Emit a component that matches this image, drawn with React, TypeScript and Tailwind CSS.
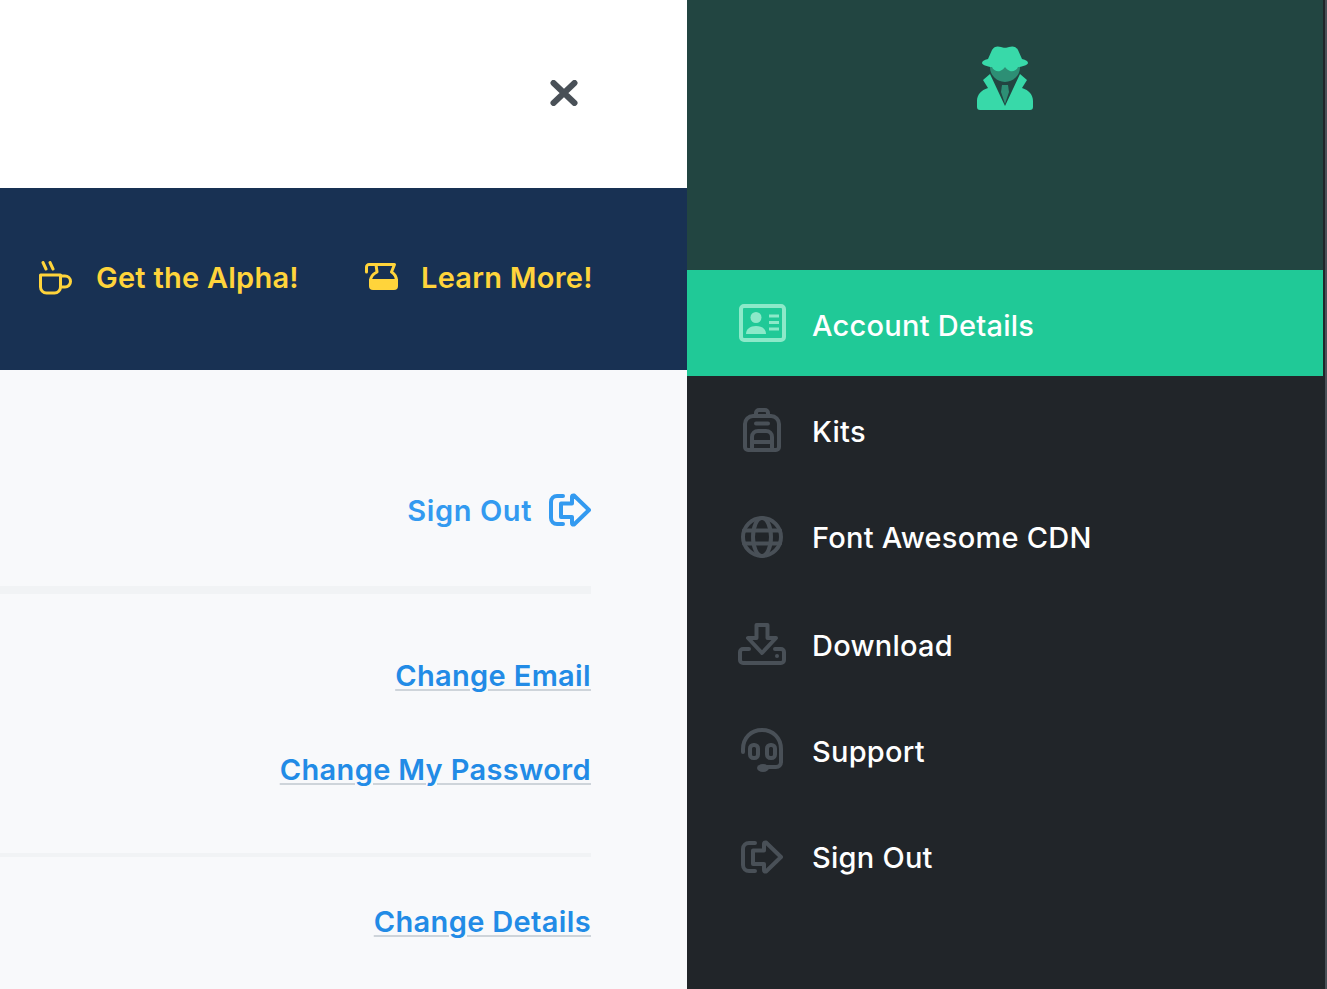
const font = { fontFamily: '"Inter", sans-serif' }

function Stroke({ className, children, w = 48, h = 48 }: { className: string; children: React.ReactNode; w?: number; h?: number }) {
  return (
    <svg width={w} height={h} viewBox={`0 0 ${w} ${h}`} fill="none" stroke="currentColor" strokeWidth="4" strokeLinecap="round" strokeLinejoin="round" className={className}>
      {children}
    </svg>
  )
}

const SignOutPaths = () => (
  <>
    <path d="M14 3H8A6 6 0 0 0 2 9V25A6 6 0 0 0 8 31H14" />
    <path d="M25 2.500L40 17L25 31.500Q23 32 23 30V24H12V10.500H23V4Q23 2 25 2.500Z" />
  </>
)

const items = [
  {
    label: 'Account Details',
    active: true,
    icon: (
      <Stroke className="text-[#8ce9c9] -translate-y-[3px]">
        <rect x="3" y="7" width="43" height="34" rx="3" />
        <circle cx="18" cy="18.500" r="5.500" fill="currentColor" stroke="none" />
        <path d="M8 35c0-5 4-8 10-8s10 3 10 8z" fill="currentColor" stroke="none" />
        <path d="M31 17h10M31 23.500h10M31 30h10" strokeWidth="3" strokeLinecap="butt" />
      </Stroke>
    ),
  },
  {
    label: 'Kits',
    icon: (
      <Stroke className="text-[#495057] -translate-y-[2px]" h={44}>
        <path d="M18 6V5a3 3 0 0 1 3-3h6a3 3 0 0 1 3 3v1" />
        <path d="M15 8H33A8 8 0 0 1 41 16V39A3 3 0 0 1 38 42H10A3 3 0 0 1 7 39V16A8 8 0 0 1 15 8Z" />
        <path d="M18 15.500H30M14 42V29a6 6 0 0 1 6-6H28a6 6 0 0 1 6 6V42M14 34H34" />
      </Stroke>
    ),
  },
  {
    label: 'Font Awesome CDN',
    icon: (
      <Stroke className="text-[#495057] -translate-y-[1px]" h={42}>
        <circle cx="24" cy="21" r="19" />
        <ellipse cx="24" cy="21" rx="9" ry="19" />
        <path d="M6 14.500H42M6 27.500H42" />
      </Stroke>
    ),
  },
  {
    label: 'Download',
    icon: (
      <Stroke className="text-[#495057] -translate-y-[2px]" h={42}>
        <path d="M18.500 2H29.500V15H38L24 30L10 15H18.500Z" />
        <path d="M11 26H5A3 3 0 0 0 2 29V37A3 3 0 0 0 5 40H43A3 3 0 0 0 46 37V29A3 3 0 0 0 43 26H37" />
        <circle cx="39" cy="33" r="2" fill="currentColor" stroke="none" />
      </Stroke>
    ),
  },
  {
    label: 'Support',
    icon: (
      <Stroke className="text-[#495057] -translate-y-[2px]" h={46}>
        <path d="M5 25V22C5 11 13 3 24 3S43 11 43 22V35C43 38 41 40 38 40H28" />
        <rect x="12" y="18" width="8" height="13" rx="3.500" />
        <rect x="29" y="18" width="8" height="13" rx="3.500" />
        <ellipse cx="25" cy="41" rx="6" ry="4" fill="currentColor" stroke="none" />
      </Stroke>
    ),
  },
  {
    label: 'Sign Out',
    icon: (
      <svg width="42" height="34" viewBox="0 0 42 34" fill="none" stroke="currentColor" strokeWidth="4" strokeLinecap="round" strokeLinejoin="round" className="text-[#495057] -translate-y-[1px]">
        <SignOutPaths />
      </svg>
    ),
  },
]

function Link({ children }: { children: string }) {
  return (
    <a className="text-[29px] leading-[40px] font-semibold text-[#228be6] underline decoration-[#ced4da] decoration-2 underline-offset-[3px] tracking-[0.35px]">
      {children}
    </a>
  )
}

export default function App() {
  return (
    <div className="flex h-[989px] w-[1327px] overflow-hidden bg-[#f8f9fb]" style={font}>
      <main className="w-[687px] shrink-0">
        <div className="h-[188px] bg-white flex justify-end pr-[109px] pt-[80px]">
          <svg width="28" height="26" viewBox="0 0 28 26" className="text-[#495057]" stroke="currentColor" strokeWidth="6" strokeLinecap="round">
            <path d="M3.500 3L24.500 23M24.500 3L3.500 23" />
          </svg>
        </div>
        <div className="h-[182px] bg-[#183153] flex items-center pl-[38px] pb-[3px] text-[#ffd43b] text-[29px] font-semibold tracking-[0.25px]">
          <svg width="34" height="34" viewBox="0 0 34 34" fill="none" stroke="currentColor" strokeWidth="3" strokeLinecap="round" strokeLinejoin="round" className="mr-[24px]">
            <path d="M5 1.500L8 8M12 1.500L15 8" />
            <path d="M2.500 14H22.500V26A6 6 0 0 1 16.500 32H8.500A6 6 0 0 1 2.500 26Z" />
            <path d="M22.500 15H27A5.500 5.500 0 0 1 27 26H22.500" />
          </svg>
          <span className="w-[269px]">Get the Alpha!</span>
          <svg width="33" height="28" viewBox="0 0 33 28" className="mr-[23px] mb-[1px]">
            <path d="M1.500 9V4A2.500 2.500 0 0 1 4 1.500H29.500L26.500 9C30 11 31.500 14 31.500 18M11 1.500L12 9C8 11 5.500 14 5.500 18" fill="none" stroke="currentColor" strokeWidth="3" strokeLinecap="round" strokeLinejoin="round" />
            <path d="M4 16H33V23A4 4 0 0 1 29 27H8A4 4 0 0 1 4 23Z" fill="currentColor" />
          </svg>
          <span>Learn More!</span>
        </div>
        <div className="pr-[96px]">
          <div className="flex justify-end items-start gap-[17px] pt-[121px] h-[216px]">
            <span className="text-[29px] leading-[40px] font-semibold text-[#339af0] tracking-[0.6px]">Sign Out</span>
            <svg width="42" height="34" viewBox="0 0 42 34" fill="none" stroke="#339af0" strokeWidth="4" strokeLinecap="round" strokeLinejoin="round" className="mt-[2px]">
              <SignOutPaths />
            </svg>
          </div>
          <div className="h-2 bg-[#f1f3f5]" />
          <div className="flex flex-col items-end pt-[62px] gap-[54px]">
            <Link>Change Email</Link>
            <Link>Change My Password</Link>
          </div>
          <div className="h-1 bg-[#f1f3f5] mt-[63px]" />
          <div className="flex flex-col items-end pt-[45px]">
            <Link>Change Details</Link>
          </div>
        </div>
      </main>
      <aside className="flex-1 bg-[#212529] border-r-[2px] border-[#495057] pr-[2px]">
        <div className="h-[270px] bg-[#224541] flex justify-center pt-[46px] pr-[1px]">
          <svg width="56" height="64" viewBox="0 0 56 64" className="text-[#38d9a9]">
            <circle cx="28" cy="21" r="15" opacity=".5" fill="currentColor" />
            <path fill="currentColor" d="M15 4C17 0 21 0 24 1C26 2 30 2 32 1C35 0 39 0 41 4L45 13C49 14 51 15 51 17C51 19 44 21 41 21C40 24 36 26 33 25C30 24 29 22 28 21C27 22 26 24 23 25C20 26 16 24 15 21C12 21 5 19 5 17C5 15 7 14 11 13Z" />
            <path fill="currentColor" d="M13 28L6 34L11 42C4 44 0 49 0 55V61A3 3 0 0 0 3 64H28V60ZM43 28L50 34L45 42C52 44 56 49 56 55V61A3 3 0 0 1 53 64H28V60Z" />
            <path opacity=".5" fill="currentColor" d="M25 39H31L32 46L28 58L24 46Z" />
          </svg>
        </div>
        <nav>
          {items.map(item => (
            <div
              key={item.label}
              className={`h-[106px] flex items-center pt-[6px] pl-[51px] gap-[26px] text-[29px] font-medium tracking-[0.25px] text-white ${item.active ? 'bg-[#20c997]' : ''} ${item.label === 'Font Awesome CDN' ? 'mb-[2px]' : ''}`}
            >
              <span className="w-[48px] flex justify-center">{item.icon}</span>
              <span>{item.label}</span>
            </div>
          ))}
        </nav>
      </aside>
    </div>
  )
}
